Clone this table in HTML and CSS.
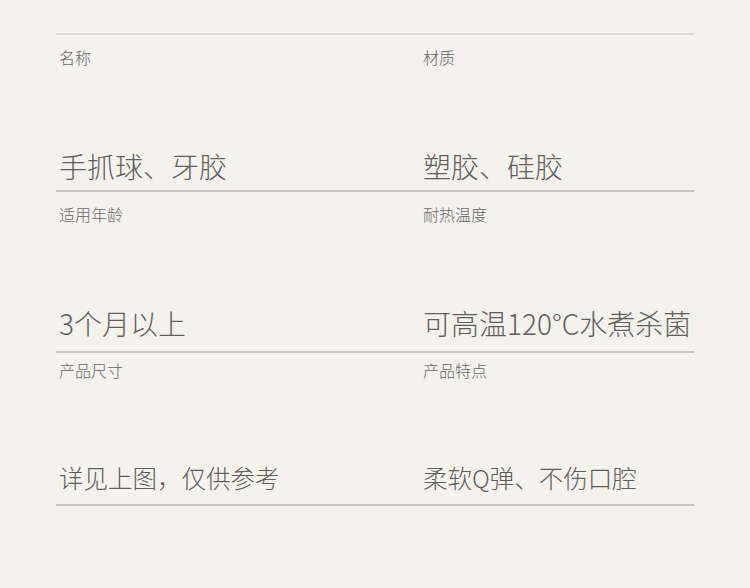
FILE: index.html
```html
<!DOCTYPE html>
<html lang="zh">
<head>
<meta charset="utf-8">
<link rel="stylesheet" href="styles.css">
</head>
<body>
<div class="specs">
  <div class="row row-first">
    <div class="cell"><div class="label">名称</div><div class="value">手抓球、牙胶</div></div>
    <div class="cell"><div class="label">材质</div><div class="value">塑胶、硅胶</div></div>
  </div>
  <div class="row row-second">
    <div class="cell"><div class="label">适用年龄</div><div class="value">3个月以上</div></div>
    <div class="cell"><div class="label">耐热温度</div><div class="value">可高温120°C水煮杀菌</div></div>
  </div>
  <div class="row row-third">
    <div class="cell"><div class="label">产品尺寸</div><div class="value">详见上图，仅供参考</div></div>
    <div class="cell"><div class="label">产品特点</div><div class="value">柔软Q弹、不伤口腔</div></div>
  </div>
</div>
</body>
</html>
```
FILE: styles.css
```css
html, body {
  margin: 0;
  padding: 0;
  background: #f4f2ec;
}
body {
  font-family: "Noto Sans CJK SC", "Noto Sans", sans-serif;
  padding-top: 33px;
  height: 588px;
  box-sizing: border-box;
}
.specs {
  margin-left: 56px;
  width: 638px;
  border-top: 2px solid #dcd9d3;
}
.row {
  display: grid;
  grid-template-columns: 364px 1fr;
  border-bottom: 2px solid #c6c3bd;
}
.cell {
  padding-left: 3px;
  display: flex;
  flex-direction: column;
}
.label {
  font-size: 16px;
  line-height: 16px;
  font-weight: 300;
  color: #666666;
}
.value {
  font-size: 28px;
  line-height: 28px;
  font-weight: 300;
  color: #5e5e5e;
  margin-top: 87px;
  white-space: nowrap;
}
.row-first .cell { padding-top: 14px; padding-bottom: 10px; }
.row-second .cell { padding-top: 14px; padding-bottom: 14px; }
.row-third .cell { padding-top: 9px; padding-bottom: 14px; }
.row-third .value {
  font-size: 24.5px;
  line-height: 24px;
  margin-top: 88px;
}
```
